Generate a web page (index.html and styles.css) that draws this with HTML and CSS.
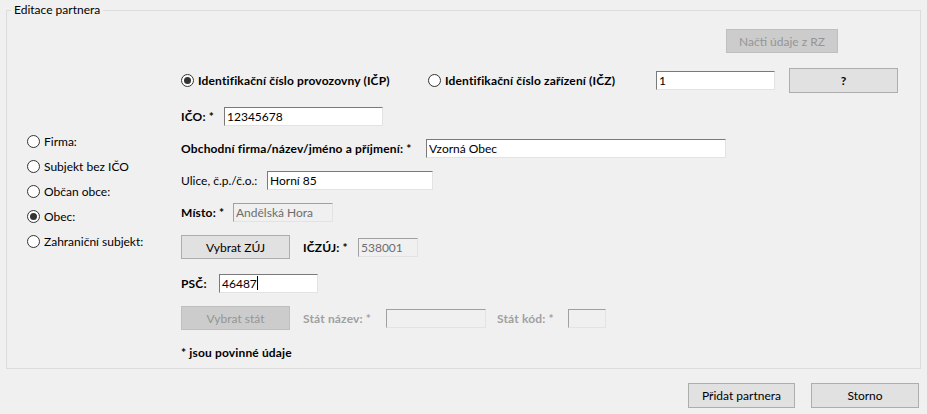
FILE: index.html
```html
<!DOCTYPE html>
<html lang="cs">
<head>
  <meta charset="UTF-8" />
  <title>Editace partnera</title>
  <link rel="stylesheet" href="styles.css">
</head>
<body>

  <fieldset class="group">
    <legend>Editace partnera</legend>
    <div class="layout">

      <div class="kinds">
        <label class="radio"><input type="radio" name="kind"> Firma:</label>
        <label class="radio"><input type="radio" name="kind"> Subjekt bez IČO</label>
        <label class="radio"><input type="radio" name="kind"> Občan obce:</label>
        <label class="radio"><input type="radio" name="kind" checked> Obec:</label>
        <label class="radio"><input type="radio" name="kind"> Zahraniční subjekt:</label>
      </div>

      <div class="form">
        <div class="row row-rz">
          <button class="btn btn-rz" disabled>Načti údaje z RZ</button>
        </div>

        <div class="row row-id">
          <label class="radio bold id-first"><input type="radio" name="idtype" checked> Identifikační číslo provozovny (IČP)</label>
          <label class="radio bold id-second"><input type="radio" name="idtype"> Identifikační číslo zařízení (IČZ)</label>
          <input class="text w-id" type="text" value="1">
          <button class="btn btn-help">?</button>
        </div>

        <div class="row row-ico">
          <span class="lbl bold lbl-ico">IČO: *</span>
          <input class="text w-ico" type="text" value="12345678">
        </div>

        <div class="row">
          <span class="lbl bold lbl-name">Obchodní firma/název/jméno a příjmení: *</span>
          <input class="text w-name" type="text" value="Vzorná Obec">
        </div>

        <div class="row">
          <span class="lbl lbl-street">Ulice, č.p./č.o.:</span>
          <input class="text w-street" type="text" value="Horní 85">
        </div>

        <div class="row">
          <span class="lbl bold lbl-place">Místo: *</span>
          <input class="text w-place" type="text" value="Andělská Hora" disabled>
        </div>

        <div class="row row-zuj">
          <button class="btn btn-pick">Vybrat ZÚJ</button>
          <span class="lbl bold lbl-zuj">IČZÚJ: *</span>
          <input class="text w-zuj" type="text" value="538001" disabled>
        </div>

        <div class="row row-psc">
          <span class="lbl bold lbl-psc">PSČ:</span>
          <span class="text w-psc caret">46487</span>
        </div>

        <div class="row row-stat">
          <button class="btn btn-pick" disabled>Vybrat stát</button>
          <span class="lbl bold off lbl-statname">Stát název: *</span>
          <input class="text w-statname" type="text" disabled>
          <span class="lbl bold off lbl-statcode">Stát kód: *</span>
          <input class="text w-statcode" type="text" disabled>
        </div>

        <div class="row row-note">
          <span class="lbl bold">* jsou povinné údaje</span>
        </div>
      </div>

    </div>
  </fieldset>

  <div class="footer">
    <button class="btn btn-add">Přidat partnera</button>
    <button class="btn btn-cancel">Storno</button>
  </div>

</body>
</html>
```

FILE: styles.css
```css
body {
  margin: 0;
  background-color: #f0f0f0;
  color: #000;
  font-family: Lato, "Noto Sans", sans-serif;
  font-size: 12px;
}
.bold {
  font-weight: bold;
  letter-spacing: 0.15px;
}

.group {
  margin: 3px 6px 0;
  padding: 0 0 4px;
  border: 1px solid #dcdcdc;
  min-width: 0;
}
.group legend {
  margin-left: 4px;
  padding: 0 3px;
  line-height: 14px;
}

.layout {
  display: grid;
  grid-template-columns: 174px 1fr;
  padding-top: 12px;
}

/* left column: kind of partner */
.kinds {
  display: flex;
  flex-direction: column;
  padding: 100px 0 0 20px;
}
.kinds .radio {
  height: 25px;
}

.radio {
  display: flex;
  align-items: center;
  gap: 4px;
  white-space: nowrap;
}
.radio input {
  appearance: none;
  margin: 0;
  width: 13px;
  height: 13px;
  border: 1px solid #333;
  border-radius: 50%;
  background: #fff;
  display: grid;
  place-content: center;
  flex: none;
}
.radio input:checked::before {
  content: "";
  width: 7px;
  height: 7px;
  border-radius: 50%;
  background: #333;
}

/* right column */
.form {
  display: flex;
  flex-direction: column;
  gap: 8px;
}
.row {
  display: flex;
  align-items: center;
  height: 24px;
  white-space: nowrap;
}
.row-id { margin-top: 6px; height: 26px; }
.row-ico { margin-top: 3px; }
.row-zuj { margin-top: 3px; }
.row-psc { margin-top: 4px; }
.row-stat { margin-top: 3px; }
.row-note { margin-top: 2px; }

.lbl { flex: none; }
.off { color: #a0a0a0; }

.id-first { width: 247px; }
.id-second { width: 228px; }

.lbl-ico { width: 43px; }
.lbl-name { width: 245px; }
.lbl-street { width: 86px; }
.lbl-place { width: 52px; }
.lbl-zuj { width: 55px; margin-left: 13px; }
.lbl-psc { width: 38px; }
.lbl-statname { width: 83px; margin-left: 13px; }
.lbl-statcode { width: 71px; margin-left: 11px; }

.text {
  box-sizing: border-box;
  height: 19px;
  margin: 0;
  padding: 0 2px;
  border: 1px solid;
  border-color: #7a7a7a #e3e3e3 #e3e3e3 #7a7a7a;
  background: #fff;
  font: inherit;
  color: #000;
  outline: none;
  display: flex;
  align-items: center;
}
.text:disabled {
  background: #f0f0f0;
  color: #6d6d6d;
  border-color: #a0a0a0 #e3e3e3 #e3e3e3 #a0a0a0;
}
.caret::after {
  content: "";
  width: 1px;
  height: 14px;
  background: #000;
}

.w-id { width: 119px; }
.w-ico { width: 159px; }
.w-name { width: 300px; }
.w-street { width: 166px; }
.w-place { width: 100px; }
.w-zuj { width: 60px; }
.w-psc { width: 99px; }
.w-statname { width: 100px; }
.w-statcode { width: 38px; }

.btn {
  box-sizing: border-box;
  height: 24px;
  margin: 0;
  padding: 0;
  border: 1px solid #adadad;
  background: #e1e1e1;
  font: inherit;
  color: #000;
}
.btn:disabled {
  border-color: #bfbfbf;
  background: #cccccc;
  color: #959595;
}
.btn-rz { width: 112px; margin-left: 545px; }
.btn-help { width: 109px; height: 25px; margin-left: 14px; font-weight: bold; }
.btn-pick { width: 109px; }

.footer {
  display: flex;
  justify-content: flex-end;
  gap: 16px;
  padding: 14px 8px 0 0;
}
.btn-add { width: 107px; height: 25px; }
.btn-cancel { width: 108px; height: 25px; }
```
